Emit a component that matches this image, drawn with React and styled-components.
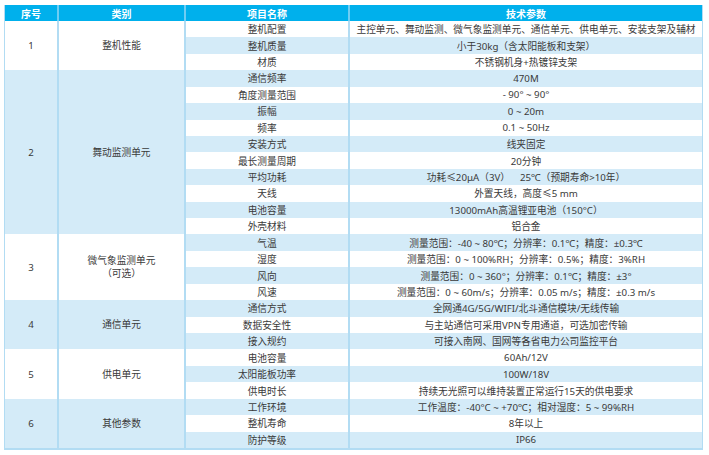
import React from 'react'
import styled, { createGlobalStyle } from 'styled-components'

const GlobalStyle = createGlobalStyle`
  html, body {
    margin: 0;
    padding: 0;
    background: #ffffff;
  }
  body {
    font-family: "Noto Sans", "Noto Sans CJK SC", sans-serif;
  }
`;

const groups = [
  {
    no: '1',
    name: ['整机性能'],
    items: [
      ['整机配置', '主控单元、舞动监测、微气象监测单元、通信单元、供电单元、安装支架及辅材'],
      ['整机质量', '小于30kg（含太阳能板和支架）'],
      ['材质', '不锈钢机身+热镀锌支架'],
    ],
  },
  {
    no: '2',
    name: ['舞动监测单元'],
    items: [
      ['通信频率', '470M'],
      ['角度测量范围', '- 90° ~ 90°'],
      ['振幅', '0 ~ 20m'],
      ['频率', '0.1 ~ 50Hz'],
      ['安装方式', '线夹固定'],
      ['最长测量周期', '20分钟'],
      ['平均功耗', '功耗≤20μA（3V）\u00a0\u00a0\u00a0 25℃（预期寿命>10年）'],
      ['天线', '外置天线，高度≤5 mm'],
      ['电池容量', '13000mAh高温锂亚电池（150°C）'],
      ['外壳材料', '铝合金'],
    ],
  },
  {
    no: '3',
    name: ['微气象监测单元', '（可选）'],
    items: [
      ['气温', '测量范围：-40 ~ 80℃；分辨率：0.1℃；精度：±0.3℃'],
      ['湿度', '测量范围：0 ~ 100%RH；分辨率：0.5%；精度：3%RH'],
      ['风向', '测量范围：0 ~ 360°；分辨率：0.1℃；精度：±3°'],
      ['风速', '测量范围：0 ~ 60m/s；分辨率：0.05 m/s；精度：±0.3 m/s'],
    ],
  },
  {
    no: '4',
    name: ['通信单元'],
    items: [
      ['通信方式', '全网通4G/5G/WIFI/北斗通信模块/无线传输'],
      ['数据安全性', '与主站通信可采用VPN专用通道，可选加密传输'],
      ['接入规约', '可接入南网、国网等各省电力公司监控平台'],
    ],
  },
  {
    no: '5',
    name: ['供电单元'],
    items: [
      ['电池容量', '60Ah/12V'],
      ['太阳能板功率', '100W/18V'],
      ['供电时长', '持续无光照可以维持装置正常运行15天的供电要求'],
    ],
  },
  {
    no: '6',
    name: ['其他参数'],
    items: [
      ['工作环境', '工作温度：-40°C ~ +70℃；相对湿度：5 ~ 99%RH'],
      ['整机寿命', '8年以上'],
      ['防护等级', 'IP66'],
    ],
  },
];

const STRIPE = '#d4ebf8';
const LINE = '#b2dcf3';

function App() {
  let rowIndex = 0;

  return (
    <>
      <GlobalStyle />
      <Page>
        <Table>
          <HeadCell>序号</HeadCell>
          <HeadCell>类别</HeadCell>
          <HeadCell>项目名称</HeadCell>
          <HeadCell $last>技术参数</HeadCell>

          {groups.map((group, gi) => {
            const groupAlt = gi % 2 === 1;
            return (
              <React.Fragment key={group.no}>
                <GroupCell $span={group.items.length} $alt={groupAlt}>
                  {group.no}
                </GroupCell>
                <GroupCell $span={group.items.length} $alt={groupAlt}>
                  {group.name.map(line => (
                    <span key={line}>{line}</span>
                  ))}
                </GroupCell>
                {group.items.map(([label, value]) => {
                  rowIndex += 1;
                  const alt = rowIndex % 2 === 0;
                  return (
                    <React.Fragment key={label + rowIndex}>
                      <NameCell $alt={alt}>{label}</NameCell>
                      <ValueCell $alt={alt}>{value}</ValueCell>
                    </React.Fragment>
                  );
                })}
              </React.Fragment>
            );
          })}
        </Table>
      </Page>
    </>
  );
}

export default App;

const Page = styled.div`
  padding: 5px 0 0 4px;
`;

const Table = styled.div`
  width: 699px;
  height: 445px;
  box-sizing: border-box;
  display: grid;
  grid-template-columns: 54px 127px 164px 1fr;
  grid-template-rows: 16px repeat(26, 1fr);
  border-left: 1px solid ${LINE};
  border-right: 1px solid ${LINE};
  border-bottom: 2px solid ${LINE};
  font-size: 9.7px;
  color: #3a3a3a;
`;

const HeadCell = styled.div`
  display: flex;
  align-items: center;
  justify-content: center;
  background: #00b0ec;
  color: #ffffff;
  font-weight: 700;
  font-size: 10px;
  border-right: ${p => (p.$last ? 'none' : '2px solid #6fcdf3')};
  box-sizing: border-box;
`;

const GroupCell = styled.div`
  grid-row: span ${p => p.$span};
  display: flex;
  flex-direction: column;
  align-items: center;
  justify-content: center;
  text-align: center;
  line-height: 13px;
  background: ${p => (p.$alt ? STRIPE : '#ffffff')};
  border-right: 2px solid ${LINE};
  box-sizing: border-box;
`;

const NameCell = styled.div`
  display: flex;
  align-items: center;
  justify-content: center;
  white-space: nowrap;
  background: ${p => (p.$alt ? STRIPE : '#ffffff')};
  border-right: 2px solid ${LINE};
  box-sizing: border-box;
`;

const ValueCell = styled.div`
  display: flex;
  align-items: center;
  justify-content: center;
  white-space: nowrap;
  background: ${p => (p.$alt ? STRIPE : '#ffffff')};
`;
